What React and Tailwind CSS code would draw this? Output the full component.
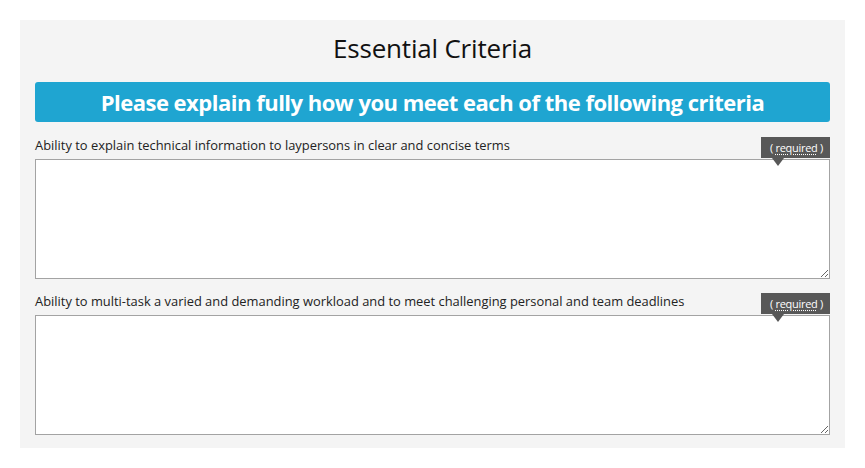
export default function App() {
  const items = [
    "Ability to explain technical information to laypersons in clear and concise terms",
    "Ability to multi-task a varied and demanding workload and to meet challenging personal and team deadlines",
  ];
  return (
    <div className="w-[865px] h-[468px] bg-white pt-5 pl-5" style={{ fontFamily: '"Open Sans", "Noto Sans", sans-serif' }}>
      <div className="w-[825px] h-[428px] bg-[#f4f4f4] px-[15px] pt-[12px]">
        <h2 className="text-center text-[26px] leading-[32px] text-[#111] tracking-[-0.2px]">Essential Criteria</h2>
        <div className="mt-[18px] h-[40px] rounded-[3px] bg-[#1fa5d1] flex items-center justify-center">
          <span className="text-white font-bold text-[22px] tracking-[-0.5px]">Please explain fully how you meet each of the following criteria</span>
        </div>
        {items.map((t, i) => (
          <div key={i} className={i === 0 ? "mt-[15px]" : "mt-[14px]"}>
            <div className="relative h-[22px]">
              <span className="text-[12.9px] leading-[16px] text-[#222] block">{t}</span>
              <div className="absolute right-0 top-0 h-[21px] pl-[9px] pr-[7px] bg-[#585858] flex items-center">
                <span className="text-white text-[11px] leading-none tracking-[-0.3px] whitespace-pre">
                  {"( "}<abbr style={{ textDecorationLine: "underline", textDecorationStyle: "dotted", textUnderlineOffset: "2px" }}>required</abbr>{" )"}
                </span>
                <div className="absolute left-[11px] top-[21px] w-0 h-0 border-l-[6px] border-r-[6px] border-t-[8px] border-l-transparent border-r-transparent border-t-[#585858]" />
              </div>
            </div>
            <textarea className="block w-[795px] h-[120px] bg-white border border-[#a3a3a3] outline-none" />
          </div>
        ))}
      </div>
    </div>
  );
}
